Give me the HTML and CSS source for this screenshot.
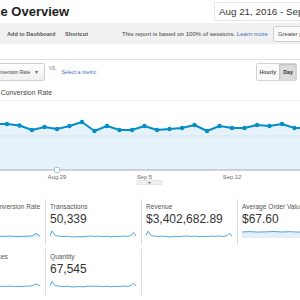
FILE: index.html
```html
<!DOCTYPE html>
<html lang="en">
<head>
  <meta charset="UTF-8" />
  <title>Ecommerce Overview</title>
  <link rel="stylesheet" href="styles.css">
</head>
<body>
  <div class="page">
    <header class="head">
      <h1 class="title">Ecommerce Overview</h1>
      <div class="daterange">Aug 21, 2016 - Sep 19, 2016</div>
    </header>

    <div class="toolbar">
      <span class="tb-btn">Add to Dashboard</span>
      <span class="tb-btn">Shortcut</span>
      <span class="notice">This report is based on 100% of sessions. <a href="#">Learn more</a></span>
      <button class="precision">Greater precision</button>
    </div>

    <div class="rule"></div>

    <div class="controls">
      <div class="metric-select">
        <span>Ecommerce Conversion Rate</span>
        <span class="caret">&#9662;</span>
      </div>
      <span class="vs">VS.</span>
      <a href="#" class="select-metric">Select a metric</a>
      <div class="seg">
        <span class="seg-btn">Hourly</span>
        <span class="seg-btn active">Day</span>
      </div>
    </div>

    <div class="legend">Ecommerce Conversion Rate</div>

    <div class="chart">
      <svg width="300" height="89" viewBox="0 0 300 89">
        <path class="area" d="M-5.5 23 L7 23 L19.5 24.5 L32 29 L44.5 26 L57 28 L69.5 25 L82 21 L94.5 30 L107 25 L119.5 29 L132 29 L144.5 25 L157 29 L169.5 28 L182 27 L194.5 24 L207 30 L219.5 25 L232 27 L244.5 27 L257 24 L269.5 25 L282 23 L294.5 27 L307 27 L307 69 L-5.5 69 Z"/>
        <line class="grid" x1="0" y1="35" x2="300" y2="35"/>
        <line class="axis" x1="0" y1="69" x2="300" y2="69"/>
        <polyline class="line" points="-5.5,23 7,23 19.5,24.5 32,29 44.5,26 57,28 69.5,25 82,21 94.5,30 107,25 119.5,29 132,29 144.5,25 157,29 169.5,28 182,27 194.5,24 207,30 219.5,25 232,27 244.5,27 257,24 269.5,25 282,23 294.5,27 307,27"/>
        <g class="dots">
          <circle cx="7" cy="23" r="2.2"/><circle cx="19.5" cy="24.5" r="2.2"/><circle cx="32" cy="29" r="2.2"/>
          <circle cx="44.5" cy="26" r="2.2"/><circle cx="57" cy="28" r="2.2"/><circle cx="69.5" cy="25" r="2.2"/>
          <circle cx="82" cy="21" r="2.2"/><circle cx="94.5" cy="30" r="2.2"/><circle cx="107" cy="25" r="2.2"/>
          <circle cx="119.5" cy="29" r="2.2"/><circle cx="132" cy="29" r="2.2"/><circle cx="144.5" cy="25" r="2.2"/>
          <circle cx="157" cy="29" r="2.2"/><circle cx="169.5" cy="28" r="2.2"/><circle cx="182" cy="27" r="2.2"/>
          <circle cx="194.5" cy="24" r="2.2"/><circle cx="207" cy="30" r="2.2"/><circle cx="219.5" cy="25" r="2.2"/>
          <circle cx="232" cy="27" r="2.2"/><circle cx="244.5" cy="27" r="2.2"/><circle cx="257" cy="24" r="2.2"/>
          <circle cx="269.5" cy="25" r="2.2"/><circle cx="282" cy="23" r="2.2"/><circle cx="294.5" cy="27" r="2.2"/>
        </g>
        <rect class="marker" x="54.5" y="66.5" width="5" height="5" rx="1"/>
        <text class="tick" x="57" y="77.5">Aug 29</text>
        <text class="tick" x="144.5" y="77.5">Sep 5</text>
        <text class="tick" x="232" y="77.5">Sep 12</text>
        <rect class="handle" x="137" y="79.5" width="25" height="4" rx="1"/>
        <path class="handle-arrow" d="M147.5 81 L151.5 81 L149.5 83 Z"/>
      </svg>
    </div>

    <div class="cards">
      <div class="card">
        <div class="card-label">Ecommerce Conversion Rate</div>
        <div class="card-value">1.48%</div>
        <svg class="spark" viewBox="0 0 86 9" preserveAspectRatio="none">
          <path class="spark-area" d="M0 7.5 L8 7.2 L16 7.6 L24 7.3 L32 7.5 L40 7 L48 7.3 L56 7.1 L64 7.5 L72 7.2 L78 6.8 L82 4.5 L86 7 L86 9 L0 9 Z"/>
          <polyline class="spark-line" points="0,7.5 8,7.2 16,7.6 24,7.3 32,7.5 40,7 48,7.3 56,7.1 64,7.5 72,7.2 78,6.8 82,4.5 86,7"/>
        </svg>
      </div>
      <div class="card">
        <div class="card-label">Transactions</div>
        <div class="card-value">50,339</div>
        <svg class="spark" viewBox="0 0 86 9" preserveAspectRatio="none">
          <polyline class="spark-line" points="0,7 2,1.8 5,6.5 9,7 13,7.6 17,7.2 21,7.8 25,8 29,7.5 33,7.9 37,7.4 41,7 45,7.4 49,7.1 53,7.7 57,7.2 61,7.8 65,7.3 69,7.5 73,7 77,7.4 81,6.6 83.5,3.5 86,7"/>
        </svg>
      </div>
      <div class="card">
        <div class="card-label">Revenue</div>
        <div class="card-value">$3,402,682.89</div>
        <svg class="spark" viewBox="0 0 86 9" preserveAspectRatio="none">
          <polyline class="spark-line" points="0,6.5 2,2.2 5,6.6 9,7.2 13,7.5 17,7.1 21,7.7 25,7.9 29,7.3 33,7.8 37,7.2 41,6.9 45,7.5 49,7 53,7.6 57,7.3 61,7.7 65,7.1 69,7.4 73,6.9 77,7.5 81,6.7 83.5,4.2 86,7.2"/>
        </svg>
      </div>
      <div class="card">
        <div class="card-label">Average Order Value</div>
        <div class="card-value">$67.60</div>
        <svg class="spark" viewBox="0 0 86 9" preserveAspectRatio="none">
          <path class="spark-area" d="M0 3 L8 2.6 L16 3.1 L24 2.8 L32 2.5 L40 3 L48 2.7 L56 3.1 L64 2.6 L72 2.9 L80 2.5 L86 2.8 L86 9 L0 9 Z"/>
          <polyline class="spark-line" points="0,3 8,2.6 16,3.1 24,2.8 32,2.5 40,3 48,2.7 56,3.1 64,2.6 72,2.9 80,2.5 86,2.8"/>
        </svg>
      </div>

      <div class="card">
        <div class="card-label">Unique Purchases</div>
        <div class="card-value">49,872</div>
        <svg class="spark" viewBox="0 0 86 9" preserveAspectRatio="none">
          <polyline class="spark-line" points="0,7.5 8,7.2 16,7.7 24,7.3 32,7.6 40,7.1 48,7.4 56,7.2 64,7.6 72,7.2 78,6.9 82,4.8 86,7"/>
        </svg>
      </div>
      <div class="card">
        <div class="card-label">Quantity</div>
        <div class="card-value">67,545</div>
        <svg class="spark" viewBox="0 0 86 9" preserveAspectRatio="none">
          <polyline class="spark-line" points="0,7 2,2.5 5,6.6 9,7.1 13,7.6 17,7.2 21,7.8 25,8 29,7.5 33,7.9 37,7.4 41,7.1 45,7.4 49,7.1 53,7.7 57,7.2 61,7.8 65,7.3 69,7.5 73,7 77,7.4 81,6.7 83.5,4 86,7"/>
        </svg>
      </div>
      <div class="card"></div>
    </div>
  </div>
</body>
</html>
```

FILE: styles.css
```css
* {
  margin: 0;
  padding: 0;
  box-sizing: border-box;
}

body {
  width: 300px;
  height: 300px;
  overflow: hidden;
  background: #fff;
  color: #333;
  font-family: "Liberation Sans", Arial, sans-serif;
}

.page {
  width: 300px;
}

/* header */
.head {
  display: grid;
  grid-template-columns: 214px 1fr;
  align-items: center;
  height: 22px;
  white-space: nowrap;
}

.title {
  margin-left: -66px;
  font-size: 13px;
  font-weight: bold;
  color: #222;
}

.daterange {
  height: 19px;
  margin-top: 1px;
  padding-left: 4px;
  border: 1px solid #e6e6e6;
  border-right: none;
  font-size: 9.8px;
  line-height: 17px;
  color: #333;
  overflow: hidden;
}

/* toolbar */
.toolbar {
  display: grid;
  grid-template-columns: 58px 57px 151px auto;
  align-items: center;
  height: 21px;
  margin-top: 1px;
  padding-left: 7px;
  background: #f1f1f1;
  white-space: nowrap;
}

.tb-btn {
  font-size: 5.6px;
  font-weight: bold;
  color: #555;
}

.notice {
  font-size: 6.1px;
  color: #444;
}

.notice a {
  color: #3b6fc0;
  text-decoration: none;
}

.precision {
  height: 16px;
  padding: 0 4px;
  border: 1px solid #cfcfcf;
  border-radius: 2px;
  background: #fafafa;
  font-family: inherit;
  font-size: 5.8px;
  color: #444;
  text-align: left;
  white-space: nowrap;
}

.rule {
  height: 1px;
  margin-top: 15px;
  background: #e3e3e3;
}

/* metric controls */
.controls {
  display: flex;
  align-items: center;
  height: 18px;
  margin-top: 3px;
  white-space: nowrap;
}

.metric-select {
  display: flex;
  align-items: center;
  justify-content: space-between;
  width: 85px;
  height: 18px;
  margin-left: -40px;
  padding: 0 6px 0 4px;
  border: 1px solid #cfcfcf;
  border-radius: 2px;
  background: linear-gradient(#fdfdfd, #f0f0f0);
  font-size: 5px;
  color: #444;
}

.caret {
  font-size: 5.5px;
  color: #666;
}

.vs {
  align-self: flex-start;
  margin: 3px 0 0 4px;
  font-size: 4.6px;
  color: #777;
}

.select-metric {
  margin-left: 5px;
  font-size: 5.3px;
  color: #3b6fc0;
  text-decoration: none;
}

.seg {
  display: flex;
  margin-left: auto;
  margin-right: 3px;
  border: 1px solid #d4d4d4;
  border-radius: 2px;
}

.seg-btn {
  height: 16px;
  padding: 0 3px;
  background: #fafafa;
  font-size: 5.3px;
  font-weight: bold;
  line-height: 16px;
  color: #555;
}

.seg-btn.active {
  border-left: 1px solid #c8c8c8;
  background: #dddddd;
  box-shadow: inset 0 1px 2px rgba(0, 0, 0, 0.15);
  color: #333;
}

/* chart */
.legend {
  height: 20px;
  margin-left: -38px;
  padding-top: 5px;
  border-bottom: 1px solid #eeeeee;
  font-size: 6.9px;
  line-height: 14px;
  color: #444;
  white-space: nowrap;
}

.chart svg {
  display: block;
}

.area {
  fill: #e6f2f9;
}

.grid {
  stroke: #d6e5ee;
  stroke-width: 1;
}

.axis {
  stroke: #a9a9a9;
  stroke-width: 1;
}

.line {
  fill: none;
  stroke: #058dc7;
  stroke-width: 2;
  stroke-linejoin: round;
}

.dots circle {
  fill: #058dc7;
}

.marker {
  fill: #fff;
  stroke: #8fb3cc;
  stroke-width: 0.8;
}

.tick {
  font-family: "Liberation Sans", Arial, sans-serif;
  font-size: 5.8px;
  fill: #666;
  text-anchor: middle;
}

.handle {
  fill: #f0f0f0;
  stroke: #d6d6d6;
  stroke-width: 0.6;
}

.handle-arrow {
  fill: #888;
}

/* scorecards */
.cards {
  display: grid;
  grid-template-columns: repeat(4, 96px);
  row-gap: 4px;
  margin-top: 9px;
  margin-left: -51px;
}

.card {
  height: 46px;
  padding: 3px 5px 0 4px;
  border-left: 1px solid #dddddd;
  white-space: nowrap;
  overflow: hidden;
}

.card-label {
  font-size: 6.6px;
  line-height: 10px;
  color: #555;
}

.card-value {
  font-size: 12px;
  line-height: 14px;
  color: #333;
}

.spark {
  display: block;
  width: 86px;
  height: 9px;
  margin-top: 3px;
}

.spark-line {
  fill: none;
  stroke: #3ca0d8;
  stroke-width: 0.9;
  vector-effect: non-scaling-stroke;
}

.spark-area {
  fill: #e3f0f9;
}
```
